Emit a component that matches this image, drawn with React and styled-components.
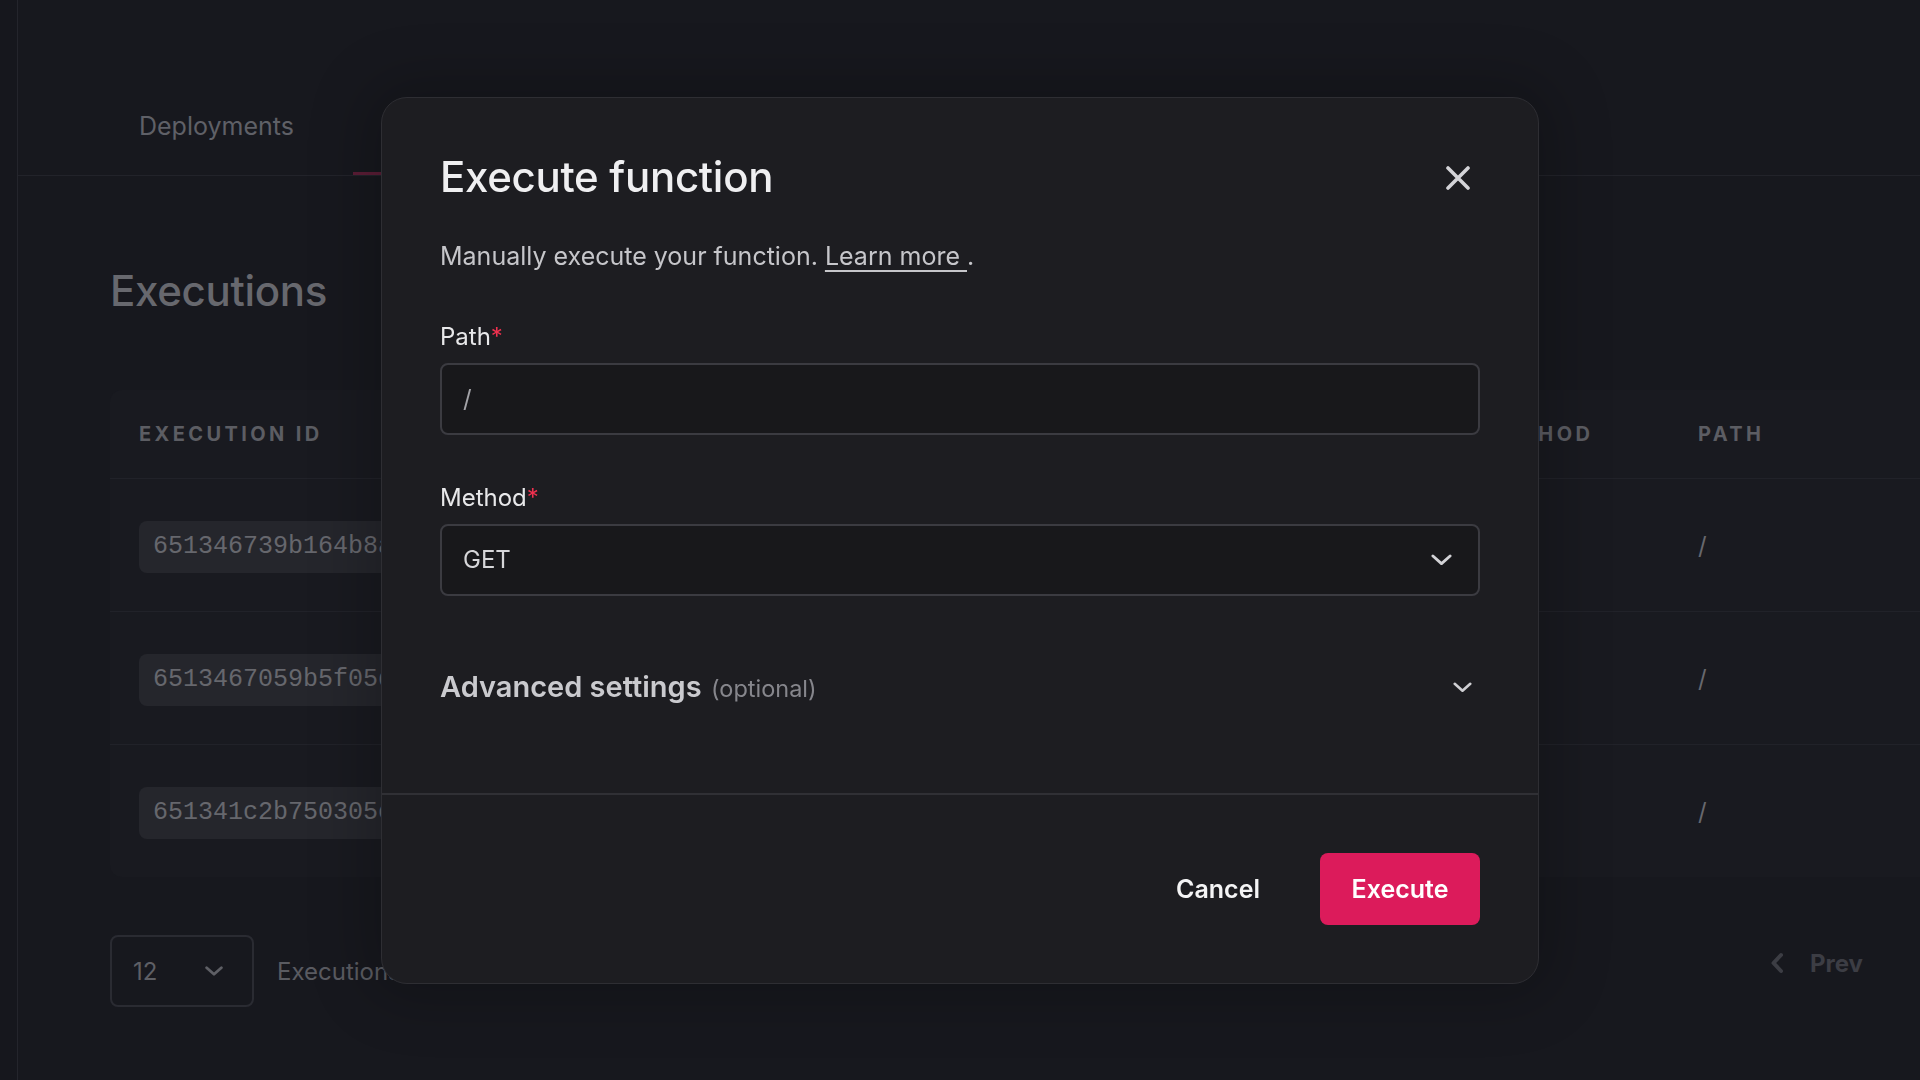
import React from 'react';
import styled, { createGlobalStyle } from 'styled-components';

const GlobalStyle = createGlobalStyle`
    * {
        box-sizing: border-box;
    }

    html,
    body {
        margin: 0;
        padding: 0;
        height: 100%;
        background: #17181e;
        font-family: Inter, 'Noto Sans', sans-serif;
        overflow: hidden;
    }
`;

const executions = [
    { id: '651346739b164b8a2c1f', status: 'completed', method: 'GET', path: '/' },
    { id: '6513467059b5f05d41aa', status: 'completed', method: 'GET', path: '/' },
    { id: '651341c2b750305e9b07', status: 'completed', method: 'GET', path: '/' },
];

const ChevronDown = ({ size = 21, color = 'currentColor', stroke = 3 }) => (
    <svg width={size} height={size * 0.55} viewBox="0 0 22 12" fill="none">
        <path d="M2 2l9 8 9-8" stroke={color} strokeWidth={stroke} strokeLinecap="round" strokeLinejoin="round" />
    </svg>
);

const ChevronLeft = () => (
    <svg width="14" height="22" viewBox="0 0 14 22" fill="none">
        <path d="M11 3L3.5 11l7.5 8" stroke="#3c3d44" strokeWidth="4" strokeLinecap="round" strokeLinejoin="round" />
    </svg>
);

const CloseIcon = () => (
    <svg width="24" height="24" viewBox="0 0 24 24" fill="none">
        <path d="M2 2l20 20M22 2L2 22" stroke="#d4d4d8" strokeWidth="3.6" strokeLinecap="round" />
    </svg>
);

export default function App() {
    return (
        <>
            <GlobalStyle />
            <Page>
                <Sidebar />
                <Main>
                    <TabBar>
                        <Tab>Deployments</Tab>
                        <Tab active>Executions</Tab>
                        <Tab>Usage</Tab>
                        <Tab>Settings</Tab>
                    </TabBar>

                    <Section>
                        <Heading>Executions</Heading>
                        <Table>
                            <HeaderRow>
                                <HeadCell>Execution ID</HeadCell>
                                <HeadCell>Status</HeadCell>
                                <HeadCell>Method</HeadCell>
                                <HeadCell>Path</HeadCell>
                            </HeaderRow>
                            {executions.map(row => (
                                <Row key={row.id}>
                                    <Cell>
                                        <IdChip>{row.id}</IdChip>
                                    </Cell>
                                    <Cell>{row.status}</Cell>
                                    <Cell>{row.method}</Cell>
                                    <Cell>{row.path}</Cell>
                                </Row>
                            ))}
                        </Table>

                        <Pagination>
                            <PageSize>
                                <span>12</span>
                                <ChevronDown size={18} color="#5e5f65" stroke={3.4} />
                            </PageSize>
                            <PageSizeLabel>Executions out of 3 total</PageSizeLabel>
                            <PageNav>
                                <ChevronLeft />
                                <span>Prev</span>
                            </PageNav>
                        </Pagination>
                    </Section>
                </Main>
            </Page>

            <Backdrop>
                <Modal>
                    <ModalBody>
                        <ModalHeader>
                            <Title>Execute function</Title>
                            <CloseButton aria-label="Close">
                                <CloseIcon />
                            </CloseButton>
                        </ModalHeader>
                        <Description>
                            Manually execute your function. <Link href="#">Learn more </Link>.
                        </Description>

                        <Field>
                            <Label>
                                Path<Required>*</Required>
                            </Label>
                            <Input defaultValue="/" />
                        </Field>

                        <Field>
                            <Label>
                                Method<Required>*</Required>
                            </Label>
                            <Select>
                                <span>GET</span>
                                <ChevronDown size={21} color="#d2d2d6" stroke={3} />
                            </Select>
                        </Field>

                        <Advanced>
                            <AdvancedTitle>
                                Advanced settings <Optional>(optional)</Optional>
                            </AdvancedTitle>
                            <ChevronDown size={19} color="#cfcfd3" stroke={3} />
                        </Advanced>
                    </ModalBody>

                    <ModalFooter>
                        <GhostButton>Cancel</GhostButton>
                        <PrimaryButton>Execute</PrimaryButton>
                    </ModalFooter>
                </Modal>
            </Backdrop>
        </>
    );
}

const Page = styled.div`
    display: flex;
    width: 100vw;
    height: 100vh;
    background: #17181e;
`;

const Sidebar = styled.aside`
    flex: 0 0 18px;
    border-right: 1px solid #24252c;
    background: #16171d;
`;

const Main = styled.main`
    flex: 1;
    display: flex;
    flex-direction: column;
    min-width: 0;
`;

const TabBar = styled.nav`
    display: flex;
    gap: 30px;
    margin-top: 108px;
    padding-left: 92px;
    border-bottom: 1px solid #22232a;
`;

const Tab = styled.div`
    padding: 0 29px 28px 29px;
    border-bottom: 3px solid ${props => (props.active ? '#5b1d36' : 'transparent')};
    color: #5f6067;
    font-size: 25px;
    line-height: 36px;
    white-space: nowrap;
`;

const Section = styled.section`
    padding-left: 92px;
`;

const Heading = styled.h1`
    margin: 90px 0 0 0;
    color: #67686e;
    font-size: 42px;
    font-weight: 500;
    line-height: 49px;
    letter-spacing: -0.3px;
`;

const Table = styled.div`
    margin-top: 75px;
    border-radius: 12px 0 0 12px;
    background: #191a20;
`;

const columns = '900px 445px 214px 1fr';

const HeaderRow = styled.div`
    display: grid;
    grid-template-columns: ${columns};
    align-items: center;
    height: 88px;
`;

const HeadCell = styled.div`
    padding-left: 29px;
    overflow: hidden;
    color: #5c5d63;
    font-size: 20px;
    font-weight: 700;
    letter-spacing: 3.4px;
    text-transform: uppercase;
    white-space: nowrap;
`;

const Row = styled.div`
    display: grid;
    grid-template-columns: ${columns};
    align-items: center;
    height: 133px;
    border-top: 1px solid #212229;
`;

const Cell = styled.div`
    padding-left: 29px;
    overflow: hidden;
    color: #67686e;
    font-size: 24px;
    white-space: nowrap;
`;

const IdChip = styled.span`
    display: inline-block;
    margin-top: 3px;
    padding: 0 14px;
    height: 52px;
    line-height: 52px;
    border-radius: 8px;
    background: #25262c;
    color: #66676d;
    font-family: 'Liberation Mono', 'DejaVu Sans Mono', monospace;
    font-size: 25px;
`;

const Pagination = styled.div`
    display: flex;
    align-items: center;
    margin-top: 58px;
    padding-right: 57px;
`;

const PageSize = styled.div`
    display: flex;
    align-items: center;
    justify-content: space-between;
    width: 144px;
    height: 72px;
    padding: 0 29px 0 21px;
    border: 2px solid #2a2b32;
    border-radius: 8px;
    color: #5e5f65;
    font-size: 24px;
`;

const PageSizeLabel = styled.span`
    margin-left: 23px;
    color: #5a5b61;
    font-size: 24px;
`;

const PageNav = styled.div`
    display: flex;
    align-items: center;
    gap: 26px;
    margin-left: auto;
    margin-top: -16px;
    color: #3c3d44;
    font-size: 24px;
    font-weight: 700;
`;

const Backdrop = styled.div`
    position: fixed;
    inset: 0;
    display: flex;
    align-items: center;
    justify-content: center;
`;

const Modal = styled.div`
    width: 1158px;
    border: 1px solid #2e2e33;
    border-radius: 26px;
    background: #1d1d21;
    box-shadow: 0 0 60px 14px rgba(0, 0, 0, 0.22);
`;

const ModalBody = styled.div`
    padding: 54px 58px 83px 58px;
`;

const ModalHeader = styled.div`
    display: flex;
    align-items: center;
    justify-content: space-between;
`;

const Title = styled.h2`
    margin: 0;
    color: #efeff1;
    font-size: 42px;
    font-weight: 500;
    line-height: 50px;
    letter-spacing: -0.3px;
`;

const CloseButton = styled.button`
    display: flex;
    align-items: center;
    justify-content: center;
    width: 40px;
    height: 40px;
    margin: 2px 2px 0 0;
    padding: 0;
    border: none;
    background: none;
    cursor: pointer;
`;

const Description = styled.p`
    margin: 36px 0 0 0;
    color: #c6c6ca;
    font-size: 25px;
    line-height: 36px;
`;

const Link = styled.a`
    color: #c6c6ca;
    text-decoration: underline;
    text-underline-offset: 5px;
    text-decoration-thickness: 2px;
`;

const Field = styled.label`
    display: flex;
    flex-direction: column;
    gap: 8px;
    margin-top: 45px;
`;

const Label = styled.span`
    color: #e8e8ea;
    font-size: 24px;
    line-height: 36px;
`;

const Required = styled.span`
    color: #f0314f;
`;

const Input = styled.input`
    height: 72px;
    padding: 0 21px;
    border: 2px solid #3b3b41;
    border-radius: 8px;
    background: #18181b;
    color: #a3a3a8;
    font-family: Inter, sans-serif;
    font-size: 24px;
    outline: none;
`;

const Select = styled.div`
    display: flex;
    align-items: center;
    justify-content: space-between;
    height: 72px;
    padding: 0 26px 0 21px;
    border: 2px solid #3b3b41;
    border-radius: 8px;
    background: #18181b;
    color: #d6d6d9;
    font-size: 24px;
`;

const Advanced = styled.div`
    display: flex;
    align-items: center;
    justify-content: space-between;
    margin-top: 70px;
    padding-right: 8px;
`;

const AdvancedTitle = styled.span`
    color: #cacace;
    font-size: 29px;
    font-weight: 600;
    line-height: 42px;
`;

const Optional = styled.span`
    margin-left: 2px;
    color: #86868c;
    font-size: 23.5px;
    font-weight: 400;
`;

const ModalFooter = styled.div`
    display: flex;
    align-items: center;
    justify-content: flex-end;
    gap: 36px;
    padding: 58px;
    border-top: 2px solid #303035;
`;

const GhostButton = styled.button`
    height: 72px;
    padding: 0 24px;
    border: none;
    background: none;
    color: #f4f4f5;
    font-family: Inter, sans-serif;
    font-size: 25px;
    font-weight: 600;
    cursor: pointer;
`;

const PrimaryButton = styled.button`
    width: 160px;
    height: 72px;
    border: none;
    border-radius: 8px;
    background: #dc1b5b;
    color: #ffffff;
    font-family: Inter, sans-serif;
    font-size: 25px;
    font-weight: 600;
    cursor: pointer;
`;
